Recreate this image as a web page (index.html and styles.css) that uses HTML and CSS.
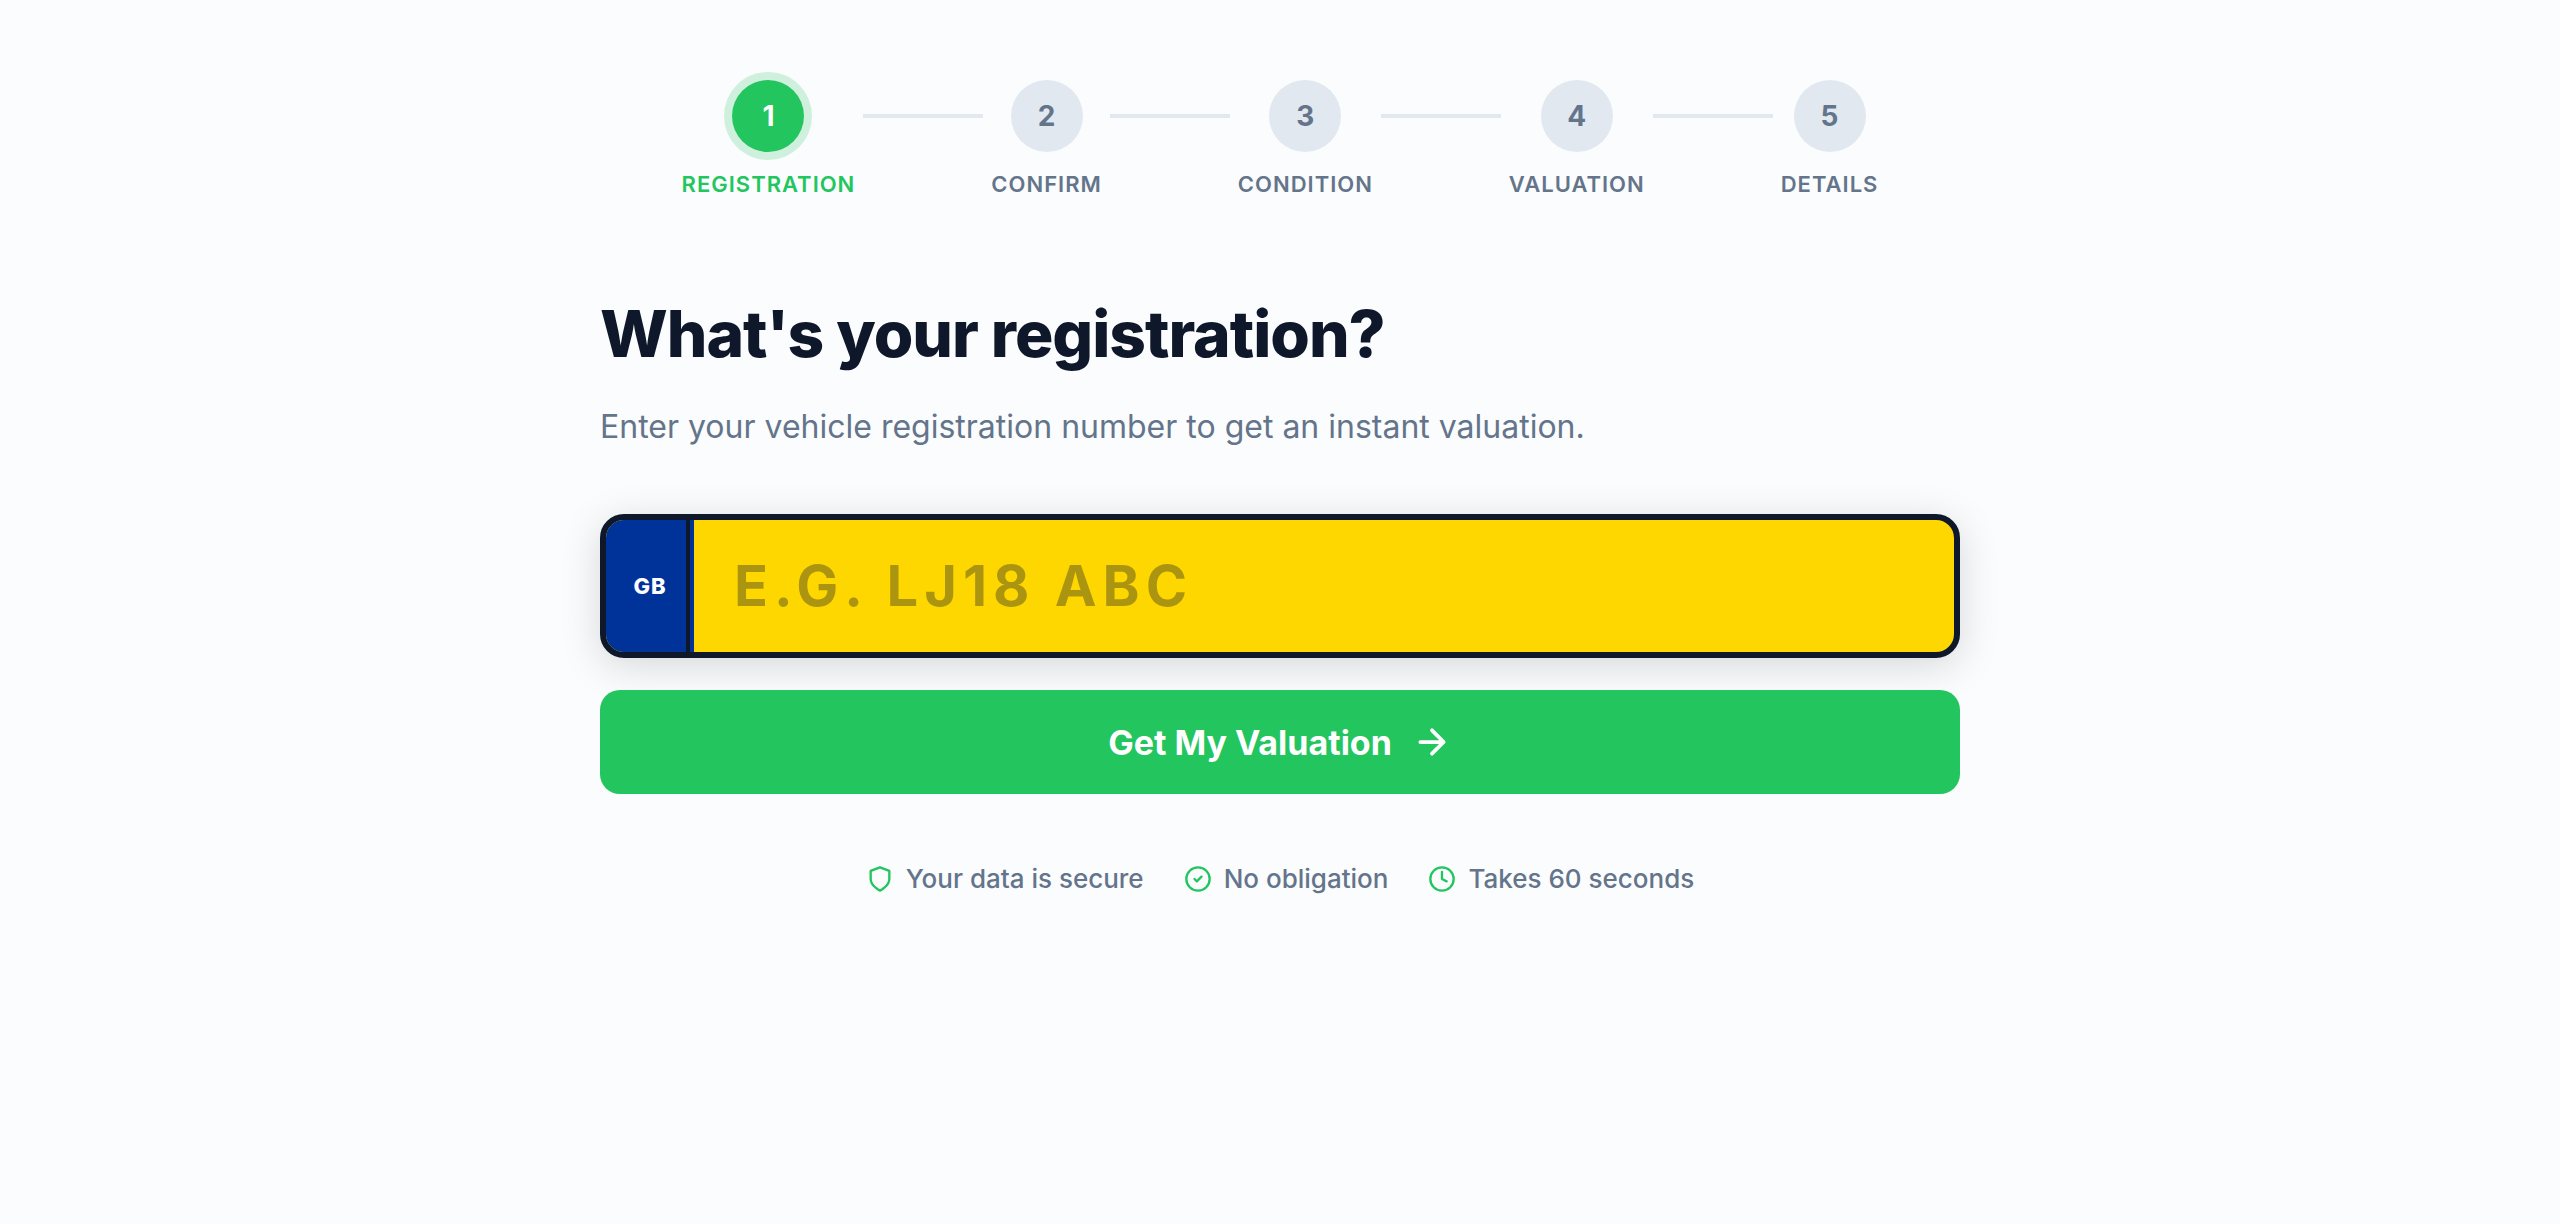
FILE: index.html
```html
<!DOCTYPE html>
<html lang="en-GB">
<head>
<meta charset="utf-8">
<meta name="viewport" content="width=device-width, initial-scale=1">
<title>Car valuation</title>
<link rel="stylesheet" href="styles.css">
</head>
<body>
<main class="page">
  <ol class="steps">
    <li class="step step-active" aria-current="step"><span class="step-number">1</span><span class="step-label">Registration</span></li>
    <li class="step-line" aria-hidden="true"></li>
    <li class="step"><span class="step-number">2</span><span class="step-label">Confirm</span></li>
    <li class="step-line" aria-hidden="true"></li>
    <li class="step"><span class="step-number">3</span><span class="step-label">Condition</span></li>
    <li class="step-line" aria-hidden="true"></li>
    <li class="step"><span class="step-number">4</span><span class="step-label">Valuation</span></li>
    <li class="step-line" aria-hidden="true"></li>
    <li class="step"><span class="step-number">5</span><span class="step-label">Details</span></li>
  </ol>
  <h1 class="title"><label for="registration">What's your registration?</label></h1>
  <p class="subtitle">Enter your vehicle registration number to get an instant valuation.</p>
  <form class="form">
    <div class="plate">
      <span class="plate-country">GB</span>
      <input class="plate-input" id="registration" type="text" placeholder="E.G. LJ18 ABC" autocomplete="off">
    </div>
    <button class="submit" type="submit">
      Get My Valuation
      <svg class="submit-icon" viewBox="0 0 24 24" aria-hidden="true"><path d="M5 12h14M12 5l7 7-7 7"/></svg>
    </button>
  </form>
  <ul class="trust">
    <li class="trust-item"><svg class="trust-icon" viewBox="0 0 24 24" aria-hidden="true"><path d="M12 22s8-4 8-10V5l-8-3-8 3v7c0 6 8 10 8 10z"/></svg>Your data is secure</li>
    <li class="trust-item"><svg class="trust-icon" viewBox="0 0 24 24" aria-hidden="true"><circle cx="12" cy="12" r="10"/><path d="M9 12l2 2 4-4"/></svg>No obligation</li>
    <li class="trust-item"><svg class="trust-icon" viewBox="0 0 24 24" aria-hidden="true"><circle cx="12" cy="12" r="10"/><path d="M12 6v6l4 2"/></svg>Takes 60 seconds</li>
  </ul>
</main>
</body>
</html>
```
FILE: styles.css
```css
* {
  box-sizing: border-box;
}

body {
  margin: 0;
  background: #fafcfd;
  color: #0f172a;
  font-family: Inter, "Liberation Sans", sans-serif;
}

.page {
  max-width: 1440px;
  margin: 0 auto;
  padding: 80px 40px;
}

.steps {
  display: flex;
  justify-content: center;
  gap: 8px;
  margin: 0 0 96px;
  padding: 0;
  list-style: none;
}

.step {
  display: flex;
  flex-direction: column;
  align-items: center;
  gap: 16px;
  color: #64748b;
}

.step-number {
  display: flex;
  align-items: center;
  justify-content: center;
  width: 72px;
  height: 72px;
  border-radius: 50%;
  background: #e2e8f0;
  font-size: 28px;
  font-weight: 700;
}

.step-label {
  font-size: 22px;
  font-weight: 600;
  line-height: 32px;
  letter-spacing: 1px;
  text-transform: uppercase;
}

.step-active {
  color: #22c55e;
}

.step-active .step-number {
  background: #22c55e;
  box-shadow: 0 0 0 8px rgba(34, 197, 94, 0.2);
  color: #fff;
}

.step-line {
  width: 120px;
  height: 4px;
  margin-top: 34px;
  background: #e2e8f0;
}

.title {
  margin: 0 0 32px;
  font-size: 64px;
  font-weight: 800;
  line-height: 76px;
  letter-spacing: -1px;
}

.subtitle {
  margin: 0 0 64px;
  color: #64748b;
  font-size: 32px;
  line-height: 46px;
}

.form {
  display: flex;
  flex-direction: column;
  gap: 32px;
}

.plate {
  display: flex;
  height: 144px;
  overflow: hidden;
  border: 6px solid #0f172a;
  border-radius: 24px;
  background: #ffd700;
  box-shadow: 0 8px 40px rgba(0, 0, 0, 0.15);
}

.plate-country {
  display: flex;
  align-items: center;
  justify-content: center;
  width: 88px;
  background: linear-gradient(#0f172a, #0f172a) right 4px top / 4px 100% no-repeat #003399;
  color: #fff;
  font-size: 22px;
  font-weight: 800;
  letter-spacing: 1px;
}

.plate-input {
  flex: 1;
  min-width: 0;
  padding: 0 40px;
  border: 0;
  outline: 0;
  background: transparent;
  color: #0f172a;
  font: inherit;
  font-size: 56px;
  font-weight: 700;
  letter-spacing: 6px;
  text-transform: uppercase;
}

.plate-input::placeholder {
  color: rgba(15, 23, 42, 0.35);
  opacity: 1;
}

.submit {
  display: flex;
  align-items: center;
  justify-content: center;
  gap: 20px;
  height: 104px;
  border: 0;
  border-radius: 20px;
  background: #22c55e;
  color: #fff;
  font: inherit;
  font-size: 34px;
  font-weight: 700;
  cursor: pointer;
}

.submit-icon {
  width: 40px;
  height: 40px;
  fill: none;
  stroke: currentColor;
  stroke-width: 2.25;
  stroke-linecap: round;
  stroke-linejoin: round;
}

.trust {
  display: flex;
  flex-wrap: wrap;
  justify-content: center;
  gap: 40px;
  margin: 64px 0 0;
  padding: 0;
  color: #64748b;
  font-size: 26px;
  font-weight: 500;
  line-height: 42px;
  list-style: none;
}

.trust-item {
  display: flex;
  align-items: center;
  gap: 12px;
}

.trust-icon {
  width: 28px;
  height: 28px;
  fill: none;
  stroke: #22c55e;
  stroke-width: 2;
  stroke-linecap: round;
  stroke-linejoin: round;
}
```
